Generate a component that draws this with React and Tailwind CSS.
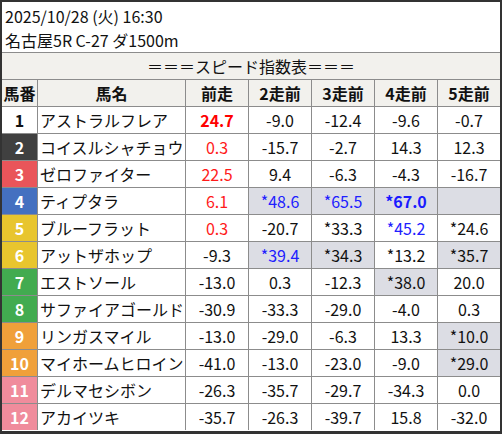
const FONT = { fontFamily: '"Noto Sans CJK JP", "Noto Sans", sans-serif' }

// 枠色: 1白 2黒 3赤 4青 5黄 6緑 7橙 8桃 (12頭立て)
const WAKU = {
  1: 'bg-white text-[#111]',
  2: 'bg-[#404040] text-white',
  3: 'bg-[#e9555a] text-white',
  4: 'bg-[#4470c0] text-white',
  5: 'bg-[#e8c52e] text-white',
  6: 'bg-[#e8c52e] text-white',
  7: 'bg-[#42ab50] text-white',
  8: 'bg-[#42ab50] text-white',
  9: 'bg-[#f0a03a] text-white',
  10: 'bg-[#f0a03a] text-white',
  11: 'bg-[#f08c9c] text-white',
  12: 'bg-[#f08c9c] text-white',
}

// cell: [value, style] — style: r=red, rb=red bold, b=blue, bb=blue bold; g=grey bg
const rows = [
  ['アストラルフレア', [['24.7', 'rb'], ['-9.0'], ['-12.4'], ['-9.6'], ['-0.7']]],
  ['コイスルシャチョウ', [['0.3', 'r'], ['-15.7'], ['-2.7'], ['14.3'], ['12.3']]],
  ['ゼロファイター', [['22.5', 'r'], ['9.4'], ['-6.3'], ['-4.3'], ['-16.7']]],
  ['ティプタラ', [['6.1', 'r'], ['*48.6', 'b g'], ['*65.5', 'b g'], ['*67.0', 'bb g'], ['', 'g']]],
  ['ブルーフラット', [['0.3', 'r'], ['-20.7'], ['*33.3'], ['*45.2', 'b'], ['*24.6']]],
  ['アットザホップ', [['-9.3'], ['*39.4', 'b g'], ['*34.3', 'g'], ['*13.2'], ['*35.7', 'g']]],
  ['エストソール', [['-13.0'], ['0.3'], ['-12.3'], ['*38.0', 'g'], ['20.0']]],
  ['サファイアゴールド', [['-30.9'], ['-33.3'], ['-29.0'], ['-4.0'], ['0.3']]],
  ['リンガスマイル', [['-13.0'], ['-29.0'], ['-6.3'], ['13.3'], ['*10.0', 'g']]],
  ['マイホームヒロイン', [['-41.0'], ['-13.0'], ['-23.0'], ['-9.0'], ['*29.0', 'g']]],
  ['デルマセシボン', [['-26.3'], ['-35.7'], ['-29.7'], ['-34.3'], ['0.0']]],
  ['アカイツキ', [['-35.7'], ['-26.3'], ['-39.7'], ['15.8'], ['-32.0']]],
]

function cellClass(style = '') {
  const s = style.split(' ')
  let c = 'flex items-center justify-center '
  c += s.includes('g') ? 'bg-[#dcdde4] ' : 'bg-white '
  if (s.includes('rb')) c += 'text-[#ff0000] font-bold'
  else if (s.includes('r')) c += 'text-[#ff1a1a]'
  else if (s.includes('bb')) c += 'text-[#1a1aff] font-bold'
  else if (s.includes('b')) c += 'text-[#2020ff]'
  else c += 'text-[#111]'
  return c
}

const HEAD = ['馬番', '馬名', '前走', '2走前', '3走前', '4走前', '5走前']

export default function App() {
  return (
    <div
      className="w-[502px] h-[434px] bg-white border-2 border-b-[3px] border-[#333] flex flex-col text-[16px] text-[#111]"
      style={FONT}
    >
      <div className="h-[50px] px-[3px] pt-[2px] leading-[24px]">
        <div>2025/10/28 (火) 16:30</div>
        <div>名古屋5R C-27 ダ1500m</div>
      </div>
      <div className="h-[27px] border-t border-[#8c8c8c] bg-[#f2f1ed] flex items-center justify-center">
        ＝＝＝スピード指数表＝＝＝
      </div>
      <div className="grid grid-cols-[35px_147px_62px_62px_62px_62px_62px] auto-rows-[26px] gap-px bg-[#8c8c8c] border-t border-[#8c8c8c]">
        {HEAD.map(h => (
          <div key={h} className="bg-[#f2f1ed] font-bold flex items-center justify-center">
            {h}
          </div>
        ))}
        {rows.map(([name, cells], i) => (
          <Row key={name} no={i + 1} name={name} cells={cells} />
        ))}
      </div>
    </div>
  )
}

function Row({ no, name, cells }) {
  return (
    <>
      <div className={`${WAKU[no]} font-bold flex items-center justify-center`}>{no}</div>
      <div className="bg-white flex items-center pl-[2px] whitespace-nowrap overflow-hidden">{name}</div>
      {cells.map(([v, st], j) => (
        <div key={j} className={cellClass(st)}>{v}</div>
      ))}
    </>
  )
}
